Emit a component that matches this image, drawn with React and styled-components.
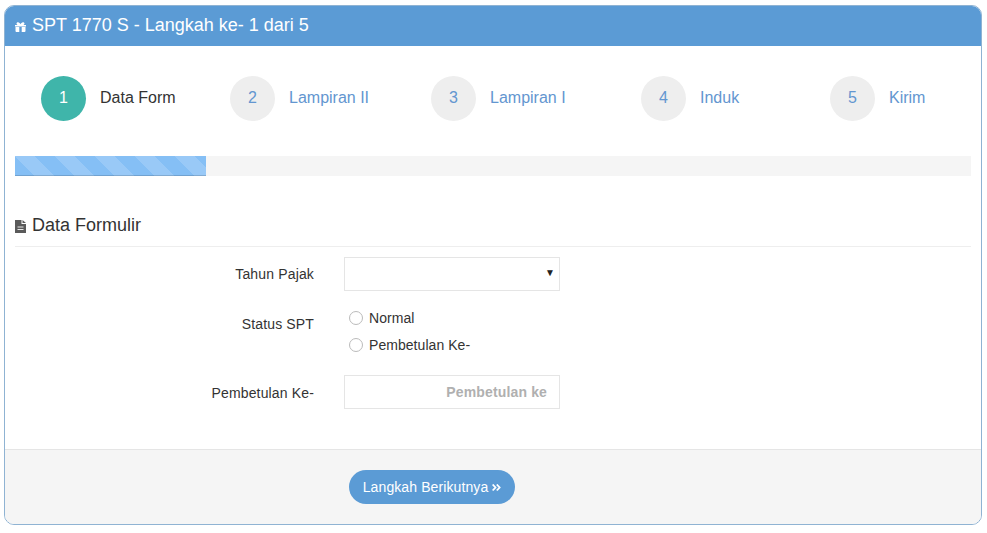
import React from "react";
import styled, { createGlobalStyle } from "styled-components";
import { FaAngleDoubleRight } from "react-icons/fa";

const Global = createGlobalStyle`
  html, body { margin: 0; padding: 0; background: #fff; }
  body { font-family: "Liberation Sans", Arial, sans-serif; font-size: 14px; color: #333; }
  * { box-sizing: border-box; }
`;

const Page = styled.div`
  padding: 5px 5px 0 4px;
`;

const Panel = styled.section`
  width: 978px;
  height: 520px;
  border: 1px solid #8fb3d3;
  border-radius: 10px;
  overflow: hidden;
  display: flex;
  flex-direction: column;
`;

const Header = styled.header`
  flex: none;
  height: 41px;
  margin: -1px -1px 0;
  padding: 0 0 0 11px;
  background: #5b9bd5;
  color: #fff;
  font-size: 18px;
  display: flex;
  align-items: center;
  gap: 6px;
  svg { flex: none; position: relative; top: 1px; }
`;

const Body = styled.div`
  flex: 1;
  padding: 0 10px;
`;

const Steps = styled.div`
  display: grid;
  grid-template-columns: 189px 201px 210px 189px 1fr;
  padding: 30px 0 0 26px;
`;

const Step = styled.div`
  display: flex;
  align-items: center;
  gap: 14px;
  font-size: 16px;
  color: ${(p) => (p.$active ? "#333" : "#6396d0")};
`;

const StepLabel = styled.span`
  padding-bottom: 2px;
`;

const Circle = styled.span`
  width: 45px;
  height: 45px;
  padding-bottom: 2px;
  border-radius: 50%;
  display: flex;
  align-items: center;
  justify-content: center;
  background: ${(p) => (p.$active ? "#3fb5aa" : "#eee")};
  color: ${(p) => (p.$active ? "#fff" : "#6396d0")};
`;

const Progress = styled.div`
  height: 20px;
  margin-top: 35px;
  background: #f5f5f5;
`;

const Bar = styled.div`
  height: 100%;
  background-color: #85bff5;
  background-image: linear-gradient(
    45deg,
    rgba(255, 255, 255, 0.16) 25%,
    transparent 25%,
    transparent 50%,
    rgba(255, 255, 255, 0.16) 50%,
    rgba(255, 255, 255, 0.16) 75%,
    transparent 75%,
    transparent
  );
  background-size: 40px 40px;
  box-shadow: inset 0 -1px 0 rgba(0, 0, 0, 0.15);
`;

const SectionTitle = styled.h3`
  margin: 38px 0 10px;
  height: 33px;
  padding-bottom: 10px;
  border-bottom: 1px solid #eee;
  font-size: 18px;
  font-weight: 400;
  line-height: 22px;
  color: #333;
  display: flex;
  align-items: center;
  gap: 6px;
  svg { flex: none; position: relative; top: 1px; }
`;

const Row = styled.div`
  display: grid;
  grid-template-columns: 299px 216px;
  column-gap: 30px;
  margin-bottom: ${(p) => p.$mb || 15}px;
`;

const Label = styled.label`
  text-align: right;
  padding-top: ${(p) => p.$pt}px;
  line-height: 20px;
  letter-spacing: 0.15px;
  color: #333;
`;

const SelectWrap = styled.div`
  position: relative;
  height: 34px;
`;

const Select = styled.select`
  width: 100%;
  height: 34px;
  appearance: none;
  background: #fff;
  border: 1px solid #e5e5e5;
  border-radius: 0;
  outline: none;
`;

const Arrow = styled.span`
  position: absolute;
  right: 5px;
  top: 8px;
  font-size: 10px;
  line-height: 16px;
  color: #222;
  pointer-events: none;
`;

const Radios = styled.div`
  display: flex;
  flex-direction: column;
  gap: 7px;
  padding: 1px 0 0 5px;
`;

const RadioLine = styled.label`
  display: flex;
  align-items: center;
  gap: 6px;
  height: 20px;
  line-height: 20px;
  letter-spacing: 0.05px;
  color: #333;
`;

const Radio = styled.input.attrs({ type: "radio" })`
  appearance: none;
  width: 14px;
  height: 14px;
  margin: 0;
  border: 1px solid #bbb;
  border-radius: 50%;
  background: #fff;
`;

const TextInput = styled.input`
  width: 100%;
  height: 34px;
  border: 1px solid #e5e5e5;
  padding: 0 12px;
  text-align: right;
  font-family: inherit;
  font-size: 14px;
  letter-spacing: 0.15px;
  outline: none;
  &::placeholder { color: #b0b0b0; font-weight: 700; opacity: 1; }
`;

const Footer = styled.footer`
  flex: none;
  height: 75px;
  background: #f5f5f5;
  border-top: 1px solid #e5e5e5;
  padding: 20px 0 0 344px;
`;

const NextButton = styled.button`
  width: 166px;
  height: 34px;
  border: 0;
  border-radius: 17px;
  background: #5b9bd5;
  color: #fff;
  font-family: inherit;
  font-size: 14px;
  letter-spacing: 0.1px;
  display: flex;
  align-items: center;
  justify-content: center;
  gap: 3px;
  padding: 0 0 0 1px;
`;

const GiftIcon = () => (
  <svg width="11" height="10" viewBox="0 0 11 10" fill="#fff">
    <path d="M3 .2C4.200.2 5 1.200 5.500 2.300 6 1.200 6.800.2 8 .2c.9 0 1.500.6 1.500 1.300 0 .6-.4 1.100-1 1.500H11v1.500H0V3h2.500c-.6-.4-1-.9-1-1.500C1.500.8 2.100.2 3 .2z" />
    <path d="M.5 5H4.300V10H1.500a1 1 0 0 1-1-1zM6.700 5H10.500V9a1 1 0 0 1-1 1H6.700z" />
  </svg>
);

const FileIcon = () => (
  <svg width="11" height="13" viewBox="0 0 11 13">
    <path fill="#5a5a5a" d="M0 0h6.500v4H11v9H0z" />
    <path fill="#5a5a5a" d="M7.500 0 11 3H7.500z" />
    <path fill="#e8e8e8" d="M2.500 6.500h6v1h-6zM2.500 9h6v1h-6z" />
  </svg>
);

const steps = ["Data Form", "Lampiran II", "Lampiran I", "Induk", "Kirim"];

export default function App() {
  return (
    <Page>
      <Global />
      <Panel>
        <Header>
          <GiftIcon />
          <span>SPT 1770 S - Langkah ke- 1 dari 5</span>
        </Header>
        <Body>
          <Steps>
            {steps.map((s, i) => (
              <Step key={s} $active={i === 0}>
                <Circle $active={i === 0}>{i + 1}</Circle>
                <StepLabel>{s}</StepLabel>
              </Step>
            ))}
          </Steps>
          <Progress>
            <Bar style={{ width: "20%" }} />
          </Progress>
          <SectionTitle>
            <FileIcon />
            Data Formulir
          </SectionTitle>
          <Row $mb={16}>
            <Label $pt={7}>Tahun Pajak</Label>
            <SelectWrap>
              <Select />
              <Arrow>▼</Arrow>
            </SelectWrap>
          </Row>
          <Row $mb={20}>
            <Label $pt={7}>Status SPT</Label>
            <Radios>
              <RadioLine><Radio name="s" />Normal</RadioLine>
              <RadioLine><Radio name="s" />Pembetulan Ke-</RadioLine>
            </Radios>
          </Row>
          <Row>
            <Label $pt={8}>Pembetulan Ke-</Label>
            <TextInput placeholder="Pembetulan ke" />
          </Row>
        </Body>
        <Footer>
          <NextButton>
            Langkah Berikutnya
            <FaAngleDoubleRight size={11} />
          </NextButton>
        </Footer>
      </Panel>
    </Page>
  );
}
